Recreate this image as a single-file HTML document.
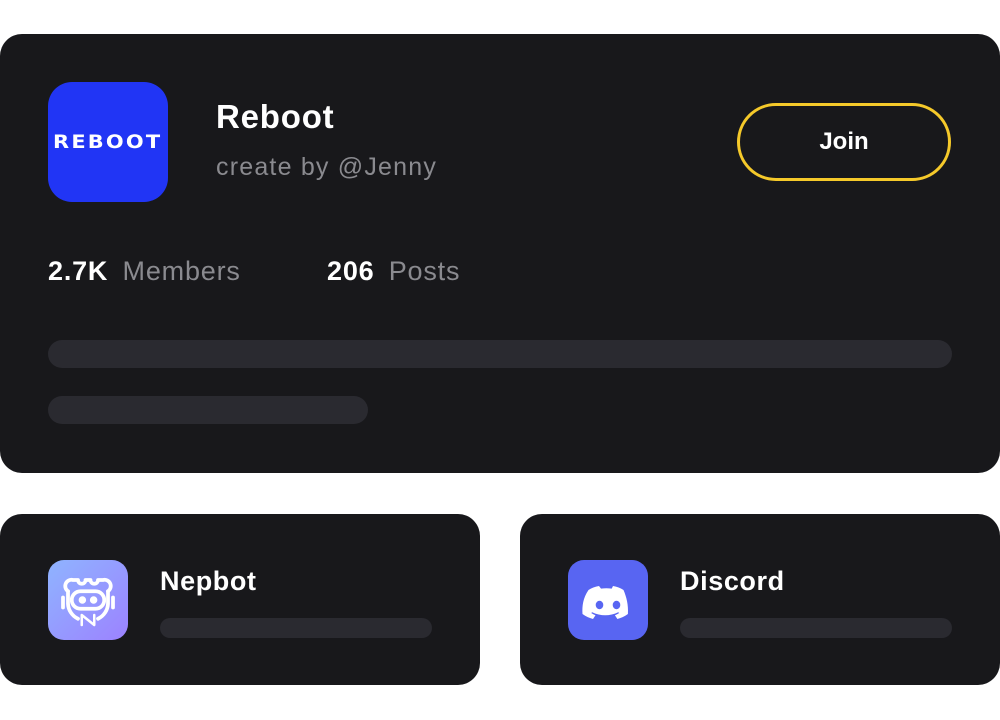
<!DOCTYPE html>
<html><head><meta charset="utf-8"><style>
body{margin:0;width:1000px;height:720px;background:#fff;font-family:"Liberation Sans",sans-serif;position:relative;overflow:hidden}
.c{position:absolute;background:#18181b;border-radius:22px}
.a{position:absolute}
.bar{position:absolute;background:#2a2a30;border-radius:14px}
</style></head><body>
<div class="c" style="left:0;top:34px;width:1000px;height:439px"></div>
<div class="a" style="left:48px;top:82px;width:120px;height:120px;background:#2135f5;border-radius:24px;color:#fff;font-weight:bold;font-size:19px;letter-spacing:2px;text-align:center;line-height:120px;font-family:'DejaVu Sans',sans-serif"><span style="display:inline-block;transform:scaleX(1.1)">REBOOT</span></div>
<div class="a" style="left:216px;top:98px;color:#fff;font-weight:bold;font-size:33px;letter-spacing:0.8px">Reboot</div>
<div class="a" style="left:216px;top:153px;color:#8a8a8f;font-size:25px;letter-spacing:1.2px">create by @Jenny</div>
<div class="a" style="left:737px;top:103px;width:208px;height:72px;border:3px solid #f5c92a;border-radius:40px;color:#fff;font-weight:bold;font-size:24px;text-align:center;line-height:72px">Join</div>
<div class="a" style="left:48px;top:256px;font-size:27px;color:#fff;font-weight:bold;letter-spacing:0.8px">2.7K <span style="font-weight:normal;color:#8a8a8f;margin-left:6px">Members</span></div>
<div class="a" style="left:327px;top:256px;font-size:27px;color:#fff;font-weight:bold;letter-spacing:0.8px">206 <span style="font-weight:normal;color:#8a8a8f;margin-left:6px">Posts</span></div>
<div class="bar" style="left:48px;top:340px;width:904px;height:28px"></div>
<div class="bar" style="left:48px;top:396px;width:320px;height:28px"></div>

<div class="c" style="left:0;top:514px;width:480px;height:171px"></div>
<div class="a" style="left:48px;top:560px;width:80px;height:80px;border-radius:16px;background:linear-gradient(135deg,#8fb4ff,#9c82ff);overflow:hidden">
<svg width="80" height="80" viewBox="8 8 64 64" fill="none" stroke="#fff" stroke-width="3" stroke-linecap="round" stroke-linejoin="round">
<path d="M24 33 a5 5 0 0 1 4-9 h4 a3 3 0 0 0 6 0 h4 a3 3 0 0 0 6 0 h4 a5 5 0 0 1 4 9"/>
<path d="M24 33 v10 a14 14 0 0 0 8 12"/><path d="M56 33 v10 a14 14 0 0 1 -8 12"/>
<rect x="27" y="33" width="26" height="14" rx="7"/>
<path d="M20 38 v8 M60 38 v8"/>
<path d="M35 60 v-8 l10 8 v-8" stroke-width="2"/>
<circle cx="35.5" cy="40" r="1.5" fill="#fff"/><circle cx="44.5" cy="40" r="1.5" fill="#fff"/>
</svg>
</div>
<div class="a" style="left:160px;top:566px;color:#fff;font-weight:bold;font-size:27px;letter-spacing:0.6px">Nepbot</div>
<div class="bar" style="left:160px;top:618px;width:272px;height:20px;border-radius:10px"></div>

<div class="c" style="left:520px;top:514px;width:480px;height:171px"></div>
<div class="a" style="left:568px;top:560px;width:80px;height:80px;border-radius:16px;background:#5865f2">
<svg width="80" height="80" viewBox="0 0 80 80"><path fill="#fff" d="M31 26 c-4 .7 -7.5 2 -10.5 4 C15 38 14 46 14.5 54 c3.5 2.6 7 4 10.5 5 l2.5-3.8 c-1.5-.6-3-1.3-4.3-2.2 l1-.8 c8.5 4 17.5 4 26 0 l1 .8 c-1.3.9-2.8 1.6-4.3 2.2 l2.5 3.8 c3.5-1 7-2.4 10.5-5 C60.5 45 58.5 37 55.5 30 c-3-2-6.5-3.3-10.5-4 l-1.3 2.6 c-3.5-.5-7.2-.5-10.7 0 Z"/><ellipse cx="31.5" cy="45" rx="3.8" ry="4.2" fill="#5865f2"/><ellipse cx="48.5" cy="45" rx="3.8" ry="4.2" fill="#5865f2"/></svg>
</div>
<div class="a" style="left:680px;top:566px;color:#fff;font-weight:bold;font-size:27px;letter-spacing:0.6px">Discord</div>
<div class="bar" style="left:680px;top:618px;width:272px;height:20px;border-radius:10px"></div>
</body></html>
